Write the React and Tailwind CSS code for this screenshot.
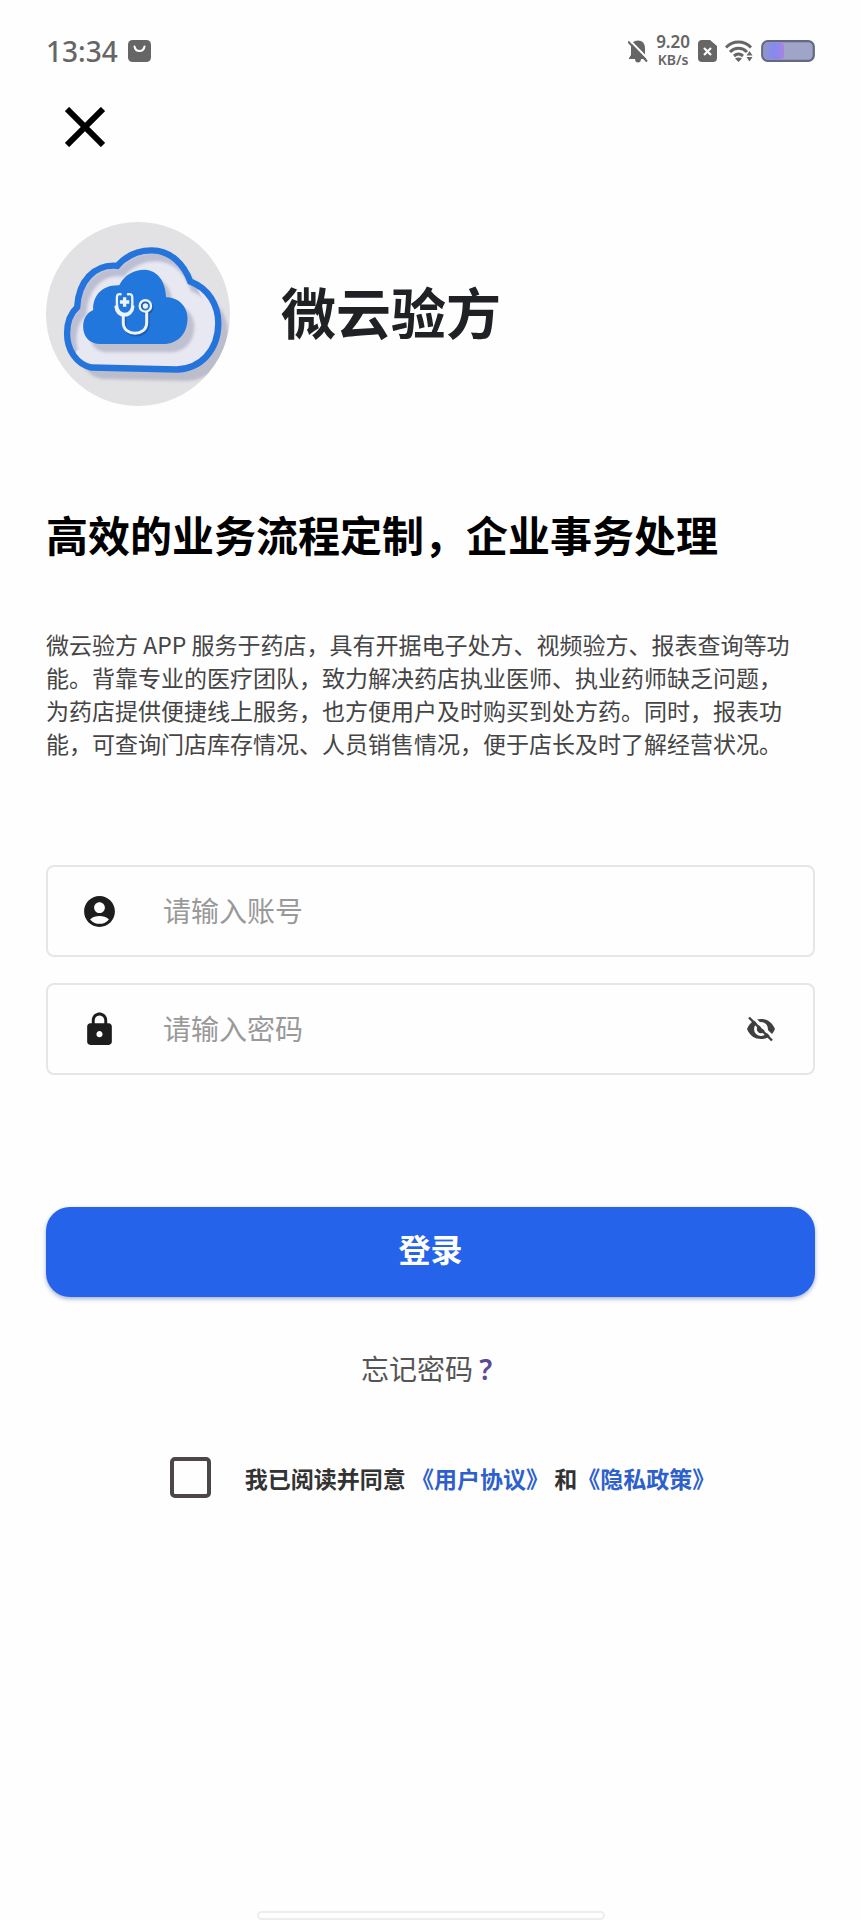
import React, { useState } from "react";
import { MdAccountCircle, MdLock } from "react-icons/md";

const OUTER_CLOUD =
  "M142 292 C146 216 192 162 262 168 C290 136 322 122 365 122 C422 122 462 164 480 215 C534 236 564 284 564 340 C564 424 508 476 440 478 L185 472 C140 462 112 420 112 370 C112 334 124 308 142 292Z";
const INNER_CLOUD =
  "M190 300 C188 258 216 224 268 226 C284 196 310 180 345 180 C382 182 406 214 408 262 C446 262 472 290 472 325 C472 370 444 402 400 402 L208 402 C176 400 160 376 160 350 C160 326 172 308 190 300Z";

function Logo() {
  return (
    <svg viewBox="49 37 550 550" className="size-[184px] shrink-0" role="img" aria-label="微云验方">
      <defs>
        <clipPath id="disc">
          <circle cx="324" cy="312" r="275" />
        </clipPath>
        <clipPath id="cloud">
          <path d={OUTER_CLOUD} />
        </clipPath>
        <filter id="soft" x="-20%" y="-20%" width="140%" height="140%">
          <feGaussianBlur stdDeviation="4" />
        </filter>
      </defs>
      <g clipPath="url(#disc)">
        <rect x="49" y="37" width="550" height="550" fill="#e2e2e5" />
        <path d={OUTER_CLOUD} transform="translate(30 34)" fill="#bcbdcb" filter="url(#soft)" />
        <path d={OUTER_CLOUD} fill="#e8e8f2" />
        <g clipPath="url(#cloud)">
          <path
            d={OUTER_CLOUD}
            transform="translate(14 18)"
            fill="none"
            stroke="#bcbed2"
            strokeWidth="28"
            filter="url(#soft)"
          />
          <path
            d="M150 470 C130 440 138 410 150 420 L440 430 C500 420 540 380 536 300 L500 236 L600 200 V500 H130Z"
            fill="#e8e8f2"
          />
        </g>
        <path d={OUTER_CLOUD} fill="none" stroke="#2474dc" strokeWidth="19" />
        <path d={INNER_CLOUD} transform="translate(20 24)" fill="#bfc0d0" filter="url(#soft)" />
        <path d={INNER_CLOUD} fill="#2277dc" />
        <g fill="none" strokeLinecap="round" transform="translate(4 5)" stroke="#1a5cb4" strokeWidth="9">
          <path d="M280 316 V338 C280 380 350 380 350 338 V308" />
          <circle cx="346" cy="288" r="16" />
        </g>
        <g fill="none" stroke="#eef2fc" strokeLinecap="round">
          <path d="M272 253 C258 250 261 262 261 282 C261 322 309 322 307 282 C307 262 310 250 294 253" strokeWidth="7" />
          <path d="M258 290 C260 324 306 324 309 290" strokeWidth="9" />
          <path d="M280 318 V338 C280 380 350 380 350 338 V308" strokeWidth="9" />
          <circle cx="346" cy="288" r="17" strokeWidth="7" />
        </g>
        <circle cx="346" cy="288" r="8" fill="#eef2fc" />
        <path d="M279 262h10v9h9v10h-9v9h-10v-9h-9v-10h9z" fill="#eef2fc" />
      </g>
    </svg>
  );
}

function EyeOff() {
  return (
    <svg viewBox="0 0 30 26" className="h-[26px] w-[30px]" aria-hidden="true">
      <path d="M1 13 C4 6 9 3 15 3 C21 3 26 6 29 13 C26 20 21 23 15 23 C9 23 4 20 1 13Z" fill="#3f3f3f" />
      <circle cx="15" cy="13" r="7" fill="#fff" />
      <circle cx="15" cy="13" r="4.2" fill="#3f3f3f" />
      <path d="M15 13 L16 8.5 L19.5 12Z" fill="#fff" />
      <path d="M5 -0.5 L28 22" stroke="#fff" strokeWidth="3" />
      <path d="M3 1.5 L26 24.5" stroke="#3f3f3f" strokeWidth="2.4" />
    </svg>
  );
}

function StatusBar() {
  return (
    <header className="flex h-8 items-center justify-between text-[#666]">
      <div className="flex items-center gap-2.5">
        <span className="text-[28px] leading-8 font-medium">13:34</span>
        <svg viewBox="0 0 23 22" className="h-[22px] w-[23px]" aria-hidden="true">
          <rect width="23" height="22" rx="4.5" fill="#666" />
          <path d="M6.5 6.5 C7.5 12.5 15.5 12.5 16.5 6.5" fill="none" stroke="#fff" strokeWidth="2" strokeLinecap="round" />
        </svg>
      </div>
      <div className="flex items-center gap-2">
        <svg viewBox="0 0 20 23" className="h-[23px] w-5" aria-hidden="true">
          <path d="M10 0.5 C14.5 0.5 17 3.5 17 8 V15 L19 18 V19 H1 V18 L3 15 V8 C3 3.5 5.5 0.5 10 0.5Z" fill="#666" />
          <path d="M7 19 H13 C13 21.5 11.7 22.5 10 22.5 C8.3 22.5 7 21.5 7 19Z" fill="#666" />
          <path d="M1.5 0 L20.5 19.5" stroke="#fff" strokeWidth="2" />
          <path d="M0 1.5 L19 21.5" stroke="#666" strokeWidth="2" />
        </svg>
        <div className="flex flex-col items-center font-semibold">
          <span className="text-[17px] leading-[18px]">9.20</span>
          <span className="text-[14px] leading-[18px]">KB/s</span>
        </div>
        <svg viewBox="0 0 19 22" className="h-[22px] w-[19px]" aria-hidden="true">
          <path d="M4 0 H12 L19 6 V18 Q19 22 15 22 H4 Q0 22 0 18 V4 Q0 0 4 0Z" fill="#666" />
          <path d="M6 8 L13 15 M13 8 L6 15" stroke="#fff" strokeWidth="2.2" />
        </svg>
        <svg viewBox="0 0 28 22" className="h-[22px] w-7" aria-hidden="true">
          <g fill="none" stroke="#666" strokeWidth="3">
            <path d="M1 7.5 C8 0.3 19 0.3 26 7.5" />
            <path d="M5 12 C10 7 17 7 22 12" />
            <path d="M9 16 C12 13.4 15 13.4 18 16" />
          </g>
          <path d="M10 18.5 C12 17 15 17 17 18.5 L13.5 22Z" fill="#666" />
          <path d="M24.5 11 L27.5 15.5 H21.5Z M24.5 21.5 L27.5 17 H21.5Z" fill="#666" />
        </svg>
        <svg viewBox="0 0 54 22" className="h-[22px] w-[54px]" aria-hidden="true">
          <defs>
            <linearGradient id="charge">
              <stop offset="0" stopColor="#9095c8" />
              <stop offset="0.5" stopColor="#8488f4" />
              <stop offset="1" stopColor="#a883e0" />
            </linearGradient>
          </defs>
          <rect x="1.2" y="1.2" width="51.6" height="19.6" rx="5.5" fill="#a0a4c6" />
          <rect x="3" y="3" width="20" height="16" rx="3" fill="url(#charge)" />
          <rect x="1.2" y="1.2" width="51.6" height="19.6" rx="5.5" fill="none" stroke="#626984" strokeWidth="2.2" />
        </svg>
      </div>
    </header>
  );
}

export default function App() {
  const [visible, setVisible] = useState(false);
  return (
    <div className="flex min-h-screen flex-col bg-[#fefefe] px-[46px] pt-[35px] font-['Noto_Sans','Noto_Sans_CJK_SC',sans-serif]">
      <StatusBar />
      <main className="flex flex-col font-['Noto_Sans_CJK_SC',sans-serif]">
        <button type="button" aria-label="关闭" className="mt-9 ml-[15px] flex size-12 items-center justify-center">
          <svg viewBox="0 0 40 40" className="size-10" aria-hidden="true">
            <path d="M2 2 L38 38 M38 2 L2 38" stroke="#000" strokeWidth="6" />
          </svg>
        </button>

        <div className="mt-[71px] flex items-start gap-[51px]">
          <Logo />
          <h1 className="mt-14 text-[55px] leading-[64px] font-bold text-[#202124]">微云验方</h1>
        </div>

        <h2 className="mt-[104px] text-[42px] leading-[48px] font-bold whitespace-nowrap text-black">
          高效的业务流程定制，企业事务处理
        </h2>

        <p className="mt-[70px] text-[23px] leading-[33px] whitespace-nowrap text-[#454545]">
          微云验方 APP 服务于药店，具有开据电子处方、视频验方、报表查询等功
          <br />
          能。背靠专业的医疗团队，致力解决药店执业医师、执业药师缺乏问题，
          <br />
          为药店提供便捷线上服务，也方便用户及时购买到处方药。同时，报表功
          <br />
          能，可查询门店库存情况、人员销售情况，便于店长及时了解经营状况。
        </p>

        <form className="mt-[105px] flex flex-col" onSubmit={(e) => e.preventDefault()}>
          <div className="flex flex-col gap-[26px]">
            <div className="flex h-[92px] items-center rounded-lg border-2 border-[#e6e6e6] pl-[33px]">
              <MdAccountCircle className="size-[37px] text-[#1d1d1d]" aria-hidden="true" />
              <input
                type="text"
                aria-label="账号"
                placeholder="请输入账号"
                className="ml-[45px] h-full min-w-0 flex-1 pb-0.5 text-[28px] outline-none placeholder:text-[#999]"
              />
            </div>
            <div className="flex h-[92px] items-center rounded-lg border-2 border-[#e6e6e6] pr-[37px] pl-[33px]">
              <MdLock className="size-[37px] text-[#1d1d1d]" aria-hidden="true" />
              <input
                type={visible ? "text" : "password"}
                aria-label="密码"
                placeholder="请输入密码"
                className="ml-[45px] h-full min-w-0 flex-1 pb-0.5 text-[28px] outline-none placeholder:text-[#999]"
              />
              <button type="button" aria-label="显示密码" onClick={() => setVisible(!visible)}>
                <EyeOff />
              </button>
            </div>
          </div>

          <button
            type="submit"
            className="mt-[132px] h-[90px] rounded-3xl bg-[#2563eb] pb-2 text-[32px] leading-10 font-bold text-white shadow-[0_2px_4px_rgba(30,60,140,0.4)]"
          >
            登录
          </button>

          <a href="#forgot" className="mt-[51px] self-center pr-2 text-[28px] leading-10 text-[#555]">
            忘记密码 <span className="font-['Noto_Sans',sans-serif] font-semibold text-[#5a4a91]">?</span>
          </a>

          <div className="mt-[68px] flex items-center justify-center gap-[34px] pl-6">
            <input
              id="agree"
              type="checkbox"
              className="size-[41px] appearance-none rounded-[5px] border-4 border-[#4a4649] checked:bg-[#2563eb]"
            />
            <div className="text-[23px] leading-8 font-bold text-[#333]">
              <label htmlFor="agree">我已阅读并同意</label>{" "}
              <a href="#terms" className="text-[#2d60cc]">《用户协议》</a>{" "}
              和<a href="#privacy" className="text-[#2d60cc]">《隐私政策》</a>
            </div>
          </div>
        </form>
      </main>
      <div className="mx-auto mt-auto h-[9px] w-[348px] rounded-full border-2 border-[#ededed]" />
    </div>
  );
}
